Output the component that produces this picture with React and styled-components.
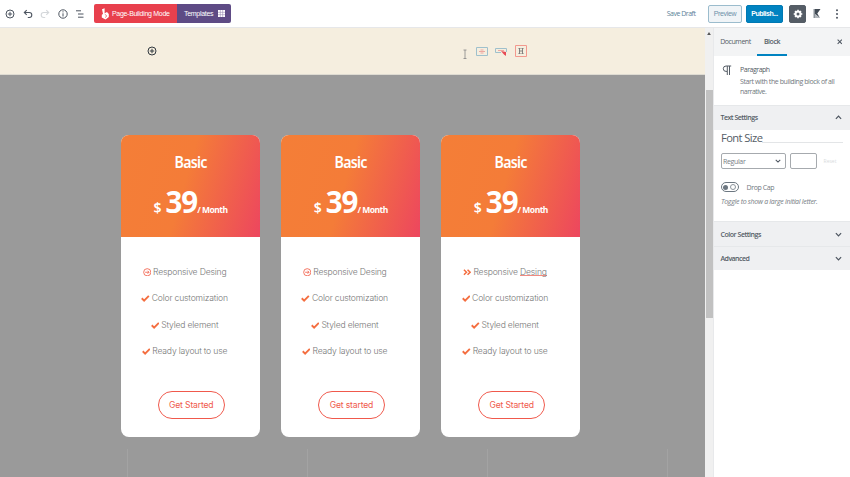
import React from "react";
import styled, { createGlobalStyle } from "styled-components";

const Global = createGlobalStyle`
  * { box-sizing: border-box; }
  body { margin: 0; background: #fff; font-family: "Open Sans", "Noto Sans", sans-serif; overflow: hidden; }
`;

const Page = styled.div`
  width: 850px;
  height: 477px;
  display: flex;
  flex-direction: column;
  overflow: hidden;
`;
const Text = styled.span`
  display: block;
  white-space: nowrap;
  flex: none;
  font-size: ${(p) => p.$size || 7}px;
  font-weight: ${(p) => p.$weight || 400};
  font-style: ${(p) => (p.$italic ? "italic" : "normal")};
  letter-spacing: ${(p) => p.$ls || 0}px;
  color: ${(p) => p.$color || "#555d66"};
`;
const Icon = styled.svg`
  display: block;
  flex: none;
  width: ${(p) => p.$w || 10}px;
  height: ${(p) => p.$h || p.$w || 10}px;
  fill: none;
  stroke: ${(p) => p.$color || "#4d5560"};
  stroke-width: ${(p) => p.$stroke || 1};
`;

const TopBar = styled.header`
  height: 28px;
  flex: none;
  display: flex;
  align-items: center;
  justify-content: space-between;
  padding: 0 9px 0 5px;
  border-bottom: 1px solid #e6e7e9;
`;
const Tools = styled.div`
  display: flex;
  align-items: center;
  gap: 7.6px;
`;
const Modes = styled.div`
  display: flex;
  height: 19px;
  margin-left: 1px;
  border-radius: 2px;
  overflow: hidden;
`;
const Mode = styled.button`
  display: flex;
  align-items: center;
  gap: ${(p) => p.$gap}px;
  width: ${(p) => p.$w}px;
  padding: 0 0 0 7px;
  border: 0;
  background: ${(p) => p.$bg};
`;
const Actions = styled.div`
  display: flex;
  align-items: center;
`;
const ActionButton = styled.button`
  width: ${(p) => p.$w}px;
  height: 18px;
  display: flex;
  align-items: center;
  justify-content: center;
  padding: 0;
  margin-left: ${(p) => p.$ml}px;
  border: 1px solid ${(p) => p.$border};
  border-radius: 2px;
  background: ${(p) => p.$bg};
`;
const MoreActions = styled.div`
  display: flex;
  align-items: center;
  gap: 12px;
  margin-left: 7px;
`;

const Workspace = styled.div`
  flex: 1;
  min-height: 0;
  display: grid;
  grid-template-columns: 705px 8px 137px;
`;
const Canvas = styled.main`
  display: flex;
  flex-direction: column;
  background: #9a9a9a;
`;
const Banner = styled.div`
  height: 47px;
  flex: none;
  display: flex;
  align-items: center;
  padding-left: 147px;
  background: #f5eedf;
  border-bottom: 1px solid #dedbd2;
`;
const BlockHints = styled.div`
  display: flex;
  align-items: center;
  gap: 7px;
  margin-left: 304px;
`;
const TextCursor = styled(Icon)`
  margin-top: 6px;
`;
const Cards = styled.section`
  display: grid;
  grid-template-columns: repeat(3, 139px);
  column-gap: 21.2px;
  padding: 60px 0 0 121px;
  flex: 1;
`;
const Card = styled.article`
  height: 301.5px;
  border-radius: 8px;
  overflow: hidden;
  background: #fff;
`;
const CardHead = styled.div`
  height: 101.5px;
  display: flex;
  flex-direction: column;
  align-items: center;
  padding-top: 16px;
  color: #fff;
  background: linear-gradient(106deg, #f47e37 0%, #f47c38 46%, #ed485d 98%);
`;
const Plan = styled.h3`
  margin: 0;
  font: 600 16.5px/22px "Noto Sans", sans-serif;
  letter-spacing: -0.9px;
  transform: scaleX(0.86);
`;
const Price = styled.div`
  display: flex;
  align-items: baseline;
  margin-top: 11px;
  font-family: "Noto Sans", sans-serif;
  line-height: 36px;
`;
const Currency = styled.span`
  font-size: 14px;
  font-weight: 600;
  margin-right: 4px;
`;
const Amount = styled.span`
  font: 700 29.5px/36px "Open Sans", sans-serif;
  letter-spacing: -1px;
`;
const Period = styled.span`
  font-size: 8.5px;
  font-weight: 700;
  letter-spacing: -0.5px;
`;
const Features = styled.ul`
  list-style: none;
  margin: 0;
  padding: 22px 12px 0 0;
`;
const Feature = styled.li`
  height: 26.5px;
  display: flex;
  align-items: center;
  justify-content: center;
  gap: 2px;
  font: 300 8.6px/12px Inter, sans-serif;
  letter-spacing: -0.18px;
  color: #777;
`;
const Misspelled = styled.span`
  display: inline-block;
  height: 10.5px;
  border-bottom: 1px solid #f08a82;
  line-height: 12px;
  vertical-align: top;
`;
const CardButton = styled.button`
  display: block;
  width: 67.5px;
  height: 28px;
  margin: 26.5px auto 0 36.5px;
  padding: 0;
  border: 1.2px solid #f0594c;
  border-radius: 14px;
  background: #fff;
  color: #f0594c;
  font: 400 8.6px Inter, sans-serif;
  letter-spacing: -0.16px;
`;
const GridTicks = styled.div`
  height: 28px;
  margin-left: 127px;
  display: grid;
  grid-template-columns: repeat(4, 180px);
  width: 578px;
  overflow: hidden;
`;
const Tick = styled.span`
  border-left: 1px solid #a3a3a3;
`;

const Scroll = styled.div`
  display: flex;
  flex-direction: column;
  align-items: center;
  background: #f0f0f0;
  padding-top: 4px;
`;
const Thumb = styled.div`
  width: 7px;
  height: 228px;
  margin-top: 55px;
  background: #c1c1c1;
`;
const Sidebar = styled.aside`
  background: #fff;
  border-left: 1px solid #e8e9eb;
`;
const Tabs = styled.nav`
  height: 28px;
  display: flex;
  align-items: stretch;
  padding-right: 8px;
  background: #f3f4f5;
`;
const Tab = styled.div`
  width: ${(p) => p.$w}px;
  display: flex;
  align-items: center;
  justify-content: center;
  padding-top: 1px;
  border-bottom: 2px solid ${(p) => (p.$on ? "#0083c1" : "transparent")};
`;
const Close = styled.div`
  margin-left: auto;
  display: flex;
  align-items: center;
`;
const BlockInfo = styled.div`
  height: 49px;
  display: flex;
  gap: 8px;
  padding: 9px 0 0 8px;
`;
const Lines = styled.div`
  display: flex;
  flex-direction: column;
  line-height: 9.6px;
`;
const Subtitle = styled.div`
  margin-top: 2.4px;
`;
const Summary = styled.div`
  height: ${(p) => p.$h || 24.5}px;
  display: flex;
  align-items: center;
  justify-content: space-between;
  padding: 0 8px 0 6.5px;
  background: #eff0f2;
  border-top: 1px solid #e6e8ea;
`;
const Settings = styled.div`
  height: 91.5px;
  padding: 0 7px;
`;
const Legend = styled.div`
  height: 20px;
  display: flex;
  align-items: flex-start;
  line-height: 15px;
  &::after {
    content: "";
    flex: 1;
    margin-top: 12px;
    border-top: 1px solid #e3e5e7;
  }
`;
const Fields = styled.div`
  display: flex;
  align-items: center;
  gap: 4px;
  margin-top: 3.5px;
`;
const Field = styled.div`
  width: ${(p) => p.$w}px;
  height: 16px;
  display: flex;
  align-items: center;
  justify-content: space-between;
  padding: 0 4px 0 1px;
  border: 1px solid #a6aaae;
  border-radius: 2px;
`;
const ToggleRow = styled.div`
  display: flex;
  align-items: center;
  gap: 8px;
  height: 12px;
  margin-top: 12px;
`;
const Toggle = styled.span`
  width: 17.5px;
  height: 9.5px;
  display: flex;
  align-items: center;
  justify-content: space-between;
  padding: 0 2px 0 1px;
  border: 1px solid #6c7781;
  border-radius: 5px;
  &::before { content: ""; width: 5px; height: 5px; border-radius: 50%; background: #6c7781; }
  &::after { content: ""; width: 4px; height: 4px; border-radius: 50%; border: 1px solid #8b949c; }
`;
const Help = styled.div`
  margin-top: 3.5px;
  line-height: 10px;
`;

const Plus = ({ color }) => (
  <Icon viewBox="0 0 10 10" $color={color}><circle cx="5" cy="5" r="4" /><path d="M5 2.8v4.4M2.8 5h4.4" /></Icon>
);
const Chevron = ({ up, size = 7 }) => (
  <Icon viewBox="0 0 8 8" $w={size} $stroke={1.4}><path d={up ? "M1 5.5 4 2.5l3 3" : "M1 2.5 4 5.5l3-3"} /></Icon>
);
const FeatureIcon = ({ kind }) => {
  if (kind === "circle")
    return <Icon viewBox="0 0 9 9" $w={8.5} $color="#f2604a" $stroke={0.9}><circle cx="4.5" cy="4.5" r="3.8" /><path d="M2.3 4.5h4M4.8 2.9l1.6 1.6-1.6 1.6" /></Icon>;
  if (kind === "angles")
    return <Icon viewBox="0 0 9 9" $w={8.5} $color="#f46e40" $stroke={1.6}><path d="m1 1.8 2.7 2.7L1 7.2M4.8 1.8l2.7 2.7-2.7 2.7" /></Icon>;
  return <Icon viewBox="0 0 9 9" $w={8.5} $color="#f46e40" $stroke={2}><path d="M.8 4.5 3.3 7 8.3 2" /></Icon>;
};

const plans = [
  { icon: "circle", action: "Get Started" },
  { icon: "circle", action: "Get started" },
  { icon: "angles", action: "Get Started", misspelled: true },
];

function PricingCard({ icon, action, misspelled }) {
  return (
    <Card>
      <CardHead>
        <Plan>Basic</Plan>
        <Price><Currency>$</Currency><Amount>39</Amount><Period>/ Month</Period></Price>
      </CardHead>
      <Features>
        <Feature><FeatureIcon kind={icon} /><span>Responsive {misspelled ? <Misspelled>Desing</Misspelled> : "Desing"}</span></Feature>
        {["Color customization", "Styled element", "Ready layout to use"].map((t) => (
          <Feature key={t}><FeatureIcon /><span>{t}</span></Feature>
        ))}
      </Features>
      <CardButton>{action}</CardButton>
    </Card>
  );
}

export default function App() {
  return (
    <Page>
      <Global />
      <TopBar>
        <Tools>
          <Plus />
          <Icon viewBox="0 0 10 10" $stroke={1.1}><path d="M3.7 1.2 1.3 3.5l2.4 2.3M1.5 3.5h4.8a2.4 2.4 0 0 1 0 5H4.8" /></Icon>
          <Icon viewBox="0 0 10 10" $color="#d4d7da" $stroke={1.1}><path d="m6.3 1.2 2.4 2.3-2.4 2.3M8.5 3.5H3.7a2.4 2.4 0 0 0 0 5h1.5" /></Icon>
          <Icon viewBox="0 0 10 10"><circle cx="5" cy="5" r="4.2" /><path d="M5 4.3v3.2M5 2.3v1.1" /></Icon>
          <Icon viewBox="0 0 10 10"><path d="M1 1.8h5M3 5h5.5M3 8.2h5.5" /></Icon>
          <Modes>
            <Mode $w={83} $gap={3} $bg="#e8404d">
              <Icon viewBox="0 0 8 12" $w={8} $h={12} $color="none"><path fill="#fff" d="M1 1.2 3.6.3v5L6 3.9 7.8 6v3L4.5 11.5.8 9.5V6.8L2 6z" /><path stroke="#e8404d" strokeWidth=".7" d="M3.8 6.2 5.8 8 4 9.6" /></Icon>
              <Text $color="#fff" $weight={500} $ls={-0.3}>Page-Building Mode</Text>
            </Mode>
            <Mode $w={54.5} $gap={5} $bg="#5e4b85">
              <Text $color="#fff" $weight={500} $ls={-0.3}>Templates</Text>
              <Icon viewBox="0 0 7 7" $w={7} $color="none"><path fill="#fff" d="M0 0h7v7H0z" /><path stroke="#8d7eaa" strokeWidth=".5" d="M2.33 0v7M4.67 0v7M0 2.33h7M0 4.67h7" /></Icon>
            </Mode>
          </Modes>
        </Tools>
        <Actions>
          <Text $color="#5b7f99" $ls={-0.48}>Save Draft</Text>
          <ActionButton $w={34} $ml={12.5} $bg="#f0f4f7" $border="#9bbccd"><Text $color="#6d92a9" $ls={-0.35}>Preview</Text></ActionButton>
          <ActionButton $w={37} $ml={4} $bg="#0083c1" $border="#0079b3"><Text $color="#fff" $weight={700} $ls={-0.48}>Publish...</Text></ActionButton>
          <ActionButton $w={17} $ml={6} $bg="#555d66" $border="#555d66">
            <Icon viewBox="0 0 10 10" $color="#fff" $stroke={2}><circle cx="5" cy="5" r="2.5" /><path strokeWidth="1.5" d="M5 .7v1.5M5 7.8v1.5M.7 5h1.5M7.8 5h1.5M2 2l1 1M7 7l1 1M8 2 7 3M3 7 2 8" /></Icon>
          </ActionButton>
          <MoreActions>
            <Icon viewBox="0 0 8 9" $w={8} $h={9} $color="none"><path fill="#8b9299" d="M.5 0h2v9h-2z" /><path fill="#424b55" d="M2 0h5.5L4.3 4.5 7 9 2 5z" /><path fill="#b3b8bd" d="m2 5 5 4H2z" /></Icon>
            <Icon viewBox="0 0 8 10" $w={8} $h={10} $color="none"><g fill="#4d5560"><circle cx="4" cy="1.2" r="1" /><circle cx="4" cy="5" r="1" /><circle cx="4" cy="8.8" r="1" /></g></Icon>
          </MoreActions>
        </Actions>
      </TopBar>
      <Workspace>
        <Canvas>
          <Banner>
            <Plus color="#333a40" />
            <BlockHints>
              <TextCursor viewBox="0 0 8 10" $w={8} $h={10} $color="#858585" $stroke={0.8}><path d="M2.5 1h3M4 1v8.5M2.5 9.5h3" /></TextCursor>
              <Icon viewBox="0 0 12 9" $w={12} $h={9} $color="#9fc0cc"><path d="M.5.5h11v8H.5z" /><path stroke="#eea8a0" d="M3 4.5h6M4.5 3h3M4.5 6h3" /></Icon>
              <Icon viewBox="0 0 13 9" $w={13} $h={9} $color="#9fc0cc"><path d="M11.5 5V1.5H.5v4H6" /><path stroke="#eea8a0" d="M3 3.5h6" /><path fill="#e64b55" stroke="none" d="M6 4l5 1v4L9 7.5z" /></Icon>
              <Icon viewBox="0 0 12 12" $w={12} $color="#f3998e" $stroke={1}><path d="M.5.5h11v11H.5z" /><path stroke="#777" strokeWidth=".9" d="M4.5 3.5v5M7.5 3.5v5M4.5 6h3M3.5 3.5h2M6.5 3.5h2M3.5 8.5h2M6.5 8.5h2" /></Icon>
            </BlockHints>
          </Banner>
          <Cards>{plans.map((p, i) => <PricingCard key={i} {...p} />)}</Cards>
          <GridTicks><Tick /><Tick /><Tick /><Tick /></GridTicks>
        </Canvas>
        <Scroll>
          <Icon viewBox="0 0 5 4" $w={4} $h={3} $color="none"><path fill="#555" d="M0 4 2.5 0 5 4z" /></Icon>
          <Thumb />
        </Scroll>
        <Sidebar>
          <Tabs>
            <Tab $w={43}><Text $ls={-0.45}>Document</Text></Tab>
            <Tab $w={30} $on><Text $weight={600} $ls={-0.45}>Block</Text></Tab>
            <Close><Icon viewBox="0 0 6 6" $w={5.5} $stroke={1.1}><path d="m.7.7 4.6 4.6M5.3.7.7 5.3" /></Icon></Close>
          </Tabs>
          <BlockInfo>
            <Icon viewBox="0 0 10 11" $w={10} $h={11} $color="#555d66"><path d="M9.2 1H4a2.7 2.7 0 0 0 0 5.4h1M5.3 1v9M7.5 1v9" /></Icon>
            <Lines>
              <Text $ls={-0.48}>Paragraph</Text>
              <Subtitle>
                <Text $ls={-0.4} $color="#727980">Start with the building block of all</Text>
                <Text $ls={-0.5} $color="#727980">narrative.</Text>
              </Subtitle>
            </Lines>
          </BlockInfo>
          <Summary><Text $weight={600} $ls={-0.5}>Text Settings</Text><Chevron up /></Summary>
          <Settings>
            <Legend><Text $size={11.2} $ls={-0.6}>Font Size</Text></Legend>
            <Fields>
              <Field $w={65}><Text $ls={-0.35} $color="#777e85">Regular</Text><Chevron size={6} /></Field>
              <Field $w={27} />
              <Text $size={5} $color="#d8dbdd">&nbsp; Reset</Text>
            </Fields>
            <ToggleRow><Toggle /><Text $color="#727980" $ls={-0.4}>Drop Cap</Text></ToggleRow>
            <Help><Text $italic $ls={-0.3} $color="#777e85">Toggle to show a large initial letter.</Text></Help>
          </Settings>
          <Summary $h={25}><Text $weight={600} $ls={-0.46}>Color Settings</Text><Chevron /></Summary>
          <Summary $h={24}><Text $weight={600} $ls={-0.55}>Advanced</Text><Chevron /></Summary>
        </Sidebar>
      </Workspace>
    </Page>
  );
}
